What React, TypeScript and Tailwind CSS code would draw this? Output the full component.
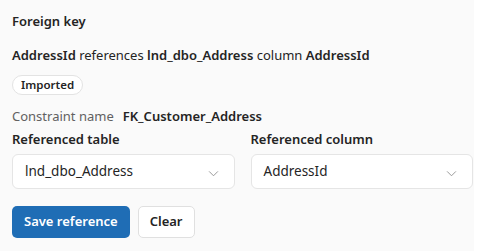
import React from "react";

function Chevron() {
  return (
    <svg width="11" height="11" viewBox="0 0 12 12" fill="none" className="mt-[3px] text-[#8f8f8f]">
      <path d="M1.5 4 L6 8.5 L10.5 4" stroke="currentColor" strokeWidth="1" strokeLinecap="round" strokeLinejoin="round" />
    </svg>
  );
}

function Select({ value }: { value: string }) {
  return (
    <div className="flex h-[35px] items-center justify-between rounded-[6px] border border-[#e5e5e5] bg-white pl-[12px] pr-[15px] text-[13.5px] text-[#242424]">
      <span>{value}</span>
      <Chevron />
    </div>
  );
}

export default function App() {
  return (
    <div className="h-[251px] w-[486px] bg-white" style={{ fontFamily: '"Noto Sans", sans-serif' }}>
      <div className="flex w-[474px] flex-col bg-[#fafafa] pb-[13px] pl-[12px] pr-[1px] pt-[11px] text-[13px] text-[#242424]">
        <div className="font-semibold leading-[20px]">Foreign key</div>
        <div className="mt-[14px] leading-[20px]">
          <span className="font-semibold">AddressId</span> references{" "}
          <span className="font-semibold">lnd_dbo_Address</span> column{" "}
          <span className="font-semibold">AddressId</span>
        </div>
        <div className="mt-[10px] flex">
          <span className="rounded-full border border-[#e3e3e3] bg-white px-[8px] text-[11.5px] font-semibold leading-[18px]">Imported</span>
        </div>
        <div className="mt-[11px] flex items-center gap-[9px] leading-[20px]">
          <span className="text-[#616161]">Constraint name</span>
          <span className="font-semibold">FK_Customer_Address</span>
        </div>
        <div className="mt-[3px] grid grid-cols-2 gap-[16px]">
          <div className="flex flex-col gap-[5px]">
            <div className="font-semibold leading-[20px]">Referenced table</div>
            <Select value="lnd_dbo_Address" />
          </div>
          <div className="flex flex-col gap-[5px]">
            <div className="font-semibold leading-[20px]">Referenced column</div>
            <Select value="AddressId" />
          </div>
        </div>
        <div className="mt-[17px] flex gap-[8px]">
          <button className="h-[32px] rounded-[5px] bg-[#1f6db5] px-[12px] text-[13px] font-semibold text-white">Save reference</button>
          <button className="h-[32px] rounded-[5px] border border-[#e0e0e0] bg-white px-[11px] text-[13px] font-semibold text-[#242424]">Clear</button>
        </div>
      </div>
    </div>
  );
}
